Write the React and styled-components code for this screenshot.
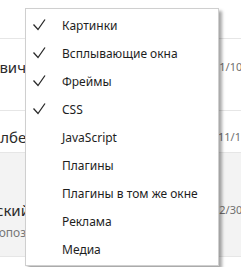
import React from 'react';
import styled, { createGlobalStyle } from 'styled-components';

const GlobalStyle = createGlobalStyle`
	html, body {
		margin: 0;
		padding: 0;
		background: #ffffff;
	}
	body {
		font-family: 'Noto Sans', 'Open Sans', sans-serif;
		overflow: hidden;
	}
`;

// the page behind the menu: a list of people with dates, scrolled sideways
const Page = styled.div`
	position: relative;
	width: 241px;
	height: 267px;
	overflow: hidden;
	display: flex;
	flex-direction: column;
`;

const Row = styled.div`
	display: grid;
	grid-template-columns: 60px 1fr 44px;
	height: ${({ $height }) => $height}px;
	box-sizing: border-box;
	border-bottom: 1px solid #e6e6e6;
	background: ${({ $muted }) => ($muted ? '#f3f3f3' : '#ffffff')};
	flex: 0 0 auto;
`;

const NameCell = styled.div`
	display: flex;
	flex-direction: column;
	align-items: flex-end;
	padding-top: ${({ $top }) => $top || 0}px;
	padding-right: ${({ $end }) => 60 - ($end || 26)}px;
	overflow: hidden;
	min-width: 0;
`;

const Name = styled.span`
	font-size: 15px;
	color: #2b2b2b;
	white-space: nowrap;
	line-height: 20px;
`;

const Sub = styled.span`
	font-size: 12px;
	color: #777777;
	white-space: nowrap;
	line-height: 16px;
	margin-top: 5px;
	margin-right: -10px;
`;

const DateCell = styled.div`
	padding-top: ${({ $top }) => $top || 0}px;
	padding-left: ${({ $shift }) => $shift || 16}px;
	font-size: 11px;
	line-height: 20px;
	color: #6f6f6f;
	white-space: nowrap;
	overflow: hidden;
`;

const Menu = styled.ul`
	position: absolute;
	left: 25px;
	top: 8px;
	width: 194px;
	margin: 0;
	padding: 2px 0;
	list-style: none;
	background: #ffffff;
	border: 1px solid #cfcfcf;
	box-sizing: border-box;
	box-shadow: 3px 3px 3px rgba(0, 0, 0, 0.35);
`;

const Item = styled.li`
	display: flex;
	align-items: center;
	height: 28px;
	font-size: 12px;
	color: #1e1e1e;
	white-space: nowrap;
`;

const CheckSlot = styled.span`
	width: 36px;
	height: 28px;
	display: flex;
	align-items: center;
	padding-left: 6px;
	box-sizing: border-box;
`;

const Check = () => (
	<svg width="14" height="14" viewBox="0 0 14 14" fill="none">
		<path d="M1.5 6.5 L6 11.5 L13 1.5" stroke="#2a2a2a" strokeWidth="1.3" strokeLinejoin="miter" />
	</svg>
);

const items = [
	{ label: 'Картинки', checked: true },
	{ label: 'Всплывающие окна', checked: true },
	{ label: 'Фреймы', checked: true },
	{ label: 'CSS', checked: true },
	{ label: 'JavaScript' },
	{ label: 'Плагины' },
	{ label: 'Плагины в том же окне' },
	{ label: 'Реклама' },
	{ label: 'Медиа' },
];

export default function App() {
	return (
		<>
			<GlobalStyle />
			<Page>
				<Row $height={39} />
				<Row $height={72}>
					<NameCell $top={18}>
						<Name>Петрович</Name>
					</NameCell>
					<div />
					<DateCell $top={18}>11/10</DateCell>
				</Row>
				<Row $height={42}>
					<NameCell $top={16} $end={42}>
						<Name>Колберг</Name>
					</NameCell>
					<div />
					<DateCell $top={16} $shift={21}>11/11</DateCell>
				</Row>
				<Row $height={104} $muted>
					<NameCell $top={47} $end={30}>
						<Name>Невский</Name>
						<Sub>опозда</Sub>
					</NameCell>
					<div />
					<DateCell $top={47}>12/30</DateCell>
				</Row>
				<Menu>
					{items.map((it) => (
						<Item key={it.label}>
							<CheckSlot>{it.checked && <Check />}</CheckSlot>
							{it.label}
						</Item>
					))}
				</Menu>
			</Page>
		</>
	);
}
